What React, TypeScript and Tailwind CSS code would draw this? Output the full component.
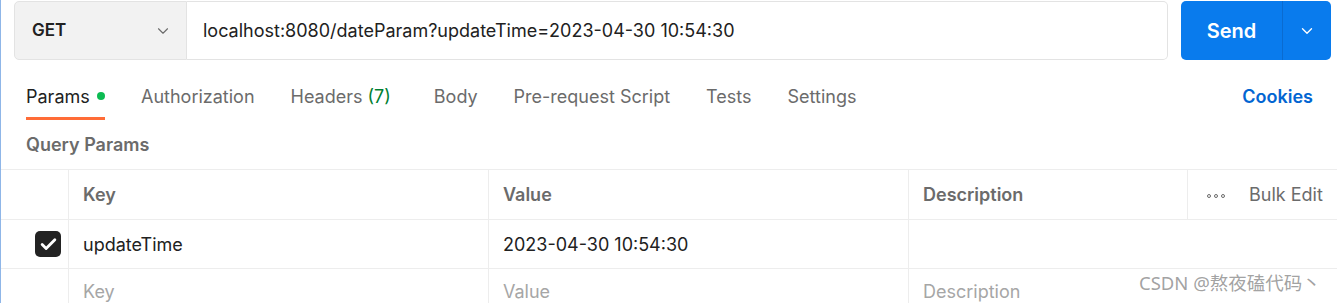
import { Check, ChevronDown } from "lucide-react";

const tabs = [
  { label: "Authorization" },
  { label: "Headers", count: "(7)" },
  { label: "Body" },
  { label: "Pre-request Script" },
  { label: "Tests" },
  { label: "Settings" },
];

export default function App() {
  return (
    <div className="relative w-[1337px] h-[303px] overflow-hidden bg-white border-l border-[#8fb6e8] font-['Inter','Noto_Sans',sans-serif] text-[#212121]">
      {/* request bar */}
      <div className="flex pt-px pl-[13px] pr-[6px] h-[61px]">
        <div className="flex items-center justify-between w-[173px] h-[59px] pl-[17px] pr-[14px] bg-[#f2f2f2] border border-[#e3e3e3] rounded-l-[5px]">
          <span className="text-[17px] font-semibold">GET</span>
          <ChevronDown className="w-[18px] h-[18px] text-[#6b6b6b]" strokeWidth={1.5} />
        </div>
        <div className="flex items-center flex-1 h-[59px] pl-[16px] border border-l-0 border-[#e3e3e3] rounded-r-[5px] text-[18px]">
          localhost:8080/dateParam?updateTime=2023-04-30 10:54:30
        </div>
        <div className="flex ml-[13px] w-[150px] h-[59px] rounded-[5px] bg-[#097bed] text-white">
          <div className="flex items-center justify-center w-[101px] text-[20px] font-semibold">Send</div>
          <div className="flex items-center justify-center flex-1 border-l border-[#0a6bd0]">
            <ChevronDown className="w-[18px] h-[18px]" strokeWidth={1.8} />
          </div>
        </div>
      </div>

      {/* tabs */}
      <div className="flex items-start justify-between pl-[25px] pr-[24px] pt-[16px] h-[108px] relative">
        <div className="flex text-[18px] text-[#6b6b6b]">
          <div className="flex flex-col">
            <div className="flex items-center h-[38px] text-[#212121]">
              Params
              <span className="ml-[7px] w-[8px] h-[8px] rounded-full bg-[#0cbb52]" />
            </div>
            <div className="mt-[2px] h-[3px] w-[79px] bg-[#ff6c37]" />
          </div>
          {tabs.map((t) => (
            <div
              key={t.label}
              className={`flex items-center h-[38px] ml-[36px] ${t.label === "Body" ? "ml-[43px]" : ""}`}
            >
              {t.label}
              {t.count && <span className="ml-[5px] text-[#007f31]">{t.count}</span>}
            </div>
          ))}
        </div>
        <div className="flex items-center h-[38px] text-[18px] font-semibold text-[#0265d2]">Cookies</div>
      </div>
      <div className="absolute left-[25px] top-[131px] text-[18px] font-semibold text-[#6b6b6b]">Query Params</div>

      {/* table */}
      <div className="border-t border-[#ededed]">
        <div className="flex h-[50px] border-b border-[#ededed] text-[18px]">
          <div className="w-[68px] border-r border-[#ededed]" />
          <div className="flex items-center w-[420px] pl-[14px] border-r border-[#ededed] font-semibold text-[#6b6b6b]">Key</div>
          <div className="flex items-center w-[420px] pl-[14px] border-r border-[#ededed] font-semibold text-[#6b6b6b]">Value</div>
          <div className="flex items-center w-[279px] pl-[14px] border-r border-[#ededed] font-semibold text-[#6b6b6b]">Description</div>
          <div className="flex items-center flex-1 pl-[19px] text-[#6b6b6b]">
            <span className="flex gap-[3px] mt-[2px]">
              <span className="w-[4px] h-[4px] rounded-full border border-[#6b6b6b]" />
              <span className="w-[4px] h-[4px] rounded-full border border-[#6b6b6b]" />
              <span className="w-[4px] h-[4px] rounded-full border border-[#6b6b6b]" />
            </span>
            <span className="ml-[24px]">Bulk Edit</span>
          </div>
        </div>
        <div className="flex h-[49px] border-b border-[#ededed] text-[18px]">
          <div className="flex items-center justify-end pr-[7px] w-[68px] border-r border-[#ededed]">
            <span className="flex items-center justify-center w-[26px] h-[26px] rounded-[5px] bg-[#232323]">
              <Check className="w-[19px] h-[19px] text-white" strokeWidth={3.6} />
            </span>
          </div>
          <div className="flex items-center w-[420px] pl-[14px] border-r border-[#ededed]">updateTime</div>
          <div className="flex items-center w-[420px] pl-[14px] border-r border-[#ededed]">2023-04-30 10:54:30</div>
          <div className="flex-1" />
        </div>
        <div className="flex h-[49px] text-[18px] text-[#a6a6a6]">
          <div className="w-[68px] border-r border-[#ededed]" />
          <div className="flex items-center w-[420px] pl-[14px] pb-[4px] border-r border-[#ededed]">Key</div>
          <div className="flex items-center w-[420px] pl-[14px] pb-[4px] border-r border-[#ededed]">Value</div>
          <div className="flex items-center flex-1 pl-[14px] pb-[4px]">Description</div>
        </div>
      </div>

      <div className="absolute left-[1138px] top-[269px] text-[18.5px] text-[#8a8a8a]/80 font-['Noto_Sans','Noto_Sans_CJK_SC',sans-serif]">
        CSDN @熬夜磕代码丶
      </div>
    </div>
  );
}
